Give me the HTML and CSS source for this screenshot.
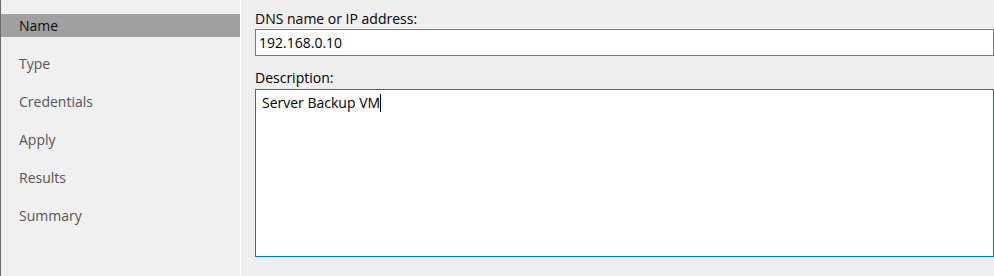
FILE: index.html
```html
<!DOCTYPE html>
<html>
<head>
<meta charset="utf-8">
<link rel="stylesheet" href="styles.css">
</head>
<body>
<div class="wizard">
  <nav class="steps">
    <div class="step active">Name</div>
    <div class="step">Type</div>
    <div class="step">Credentials</div>
    <div class="step">Apply</div>
    <div class="step">Results</div>
    <div class="step">Summary</div>
  </nav>
  <main class="form">
    <label class="label">DNS name or IP address:</label>
    <div class="input">192.168.0.10</div>
    <label class="label label-desc">Description:</label>
    <div class="textarea">Server Backup VM<span class="caret"></span></div>
  </main>
</div>
</body>
</html>
```
FILE: styles.css
```css
html, body {
  margin: 0;
  padding: 0;
  background: #efefef;
}
body {
  font-family: "Segoe UI", "Open Sans", "Noto Sans", sans-serif;
  font-size: 14px;
  color: #000;
}
.wizard {
  display: flex;
  height: 276px;
  overflow: hidden;
}
.steps {
  width: 239px;
  flex: none;
  border-left: 1px solid #6b6b6b;
  border-right: 1px solid #ffffff;
  background: #f0f0f0;
  padding-top: 14px;
  box-sizing: content-box;
}
.step {
  height: 23px;
  line-height: 23px;
  padding-left: 18px;
  margin-bottom: 15px;
  color: #555555;
}
.step.active {
  background: #a0a0a0;
  color: #111111;
}
.form {
  flex: 1;
  padding: 9px 0 0 14px;
  display: flex;
  flex-direction: column;
}
.label {
  display: block;
  height: 20px;
  line-height: 20px;
}
.label-desc {
  margin-top: 12px;
  margin-bottom: 1px;
}
.input {
  height: 25px;
  line-height: 25px;
  border: 1px solid #7a7a7a;
  background: #fff;
  padding-left: 3px;
}
.textarea {
  height: 166px;
  border: 1px solid #0078d7;
  background: #fff;
  padding: 2px 0 0 6px;
  box-sizing: border-box;
  height: 168px;
  line-height: 22px;
}
.caret {
  display: inline-block;
  width: 0;
  height: 18px;
  border-left: 1px solid #000;
  vertical-align: -4px;
}
```
